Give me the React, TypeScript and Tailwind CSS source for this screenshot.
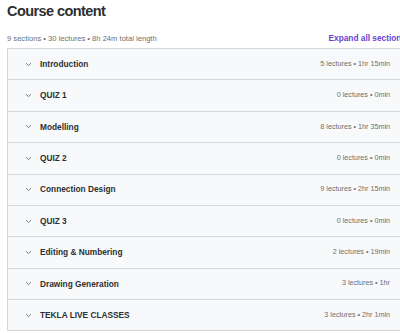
import React from 'react';

const sections = [
  { title: 'Introduction', meta: '5 lectures • 1hr 15min' },
  { title: 'QUIZ 1', meta: '0 lectures • 0min' },
  { title: 'Modelling', meta: '8 lectures • 1hr 35min' },
  { title: 'QUIZ 2', meta: '0 lectures • 0min' },
  { title: 'Connection Design', meta: '9 lectures • 2hr 15min' },
  { title: 'QUIZ 3', meta: '0 lectures • 0min' },
  { title: 'Editing & Numbering', meta: '2 lectures • 19min' },
  { title: 'Drawing Generation', meta: '3 lectures • 1hr' },
  { title: 'TEKLA LIVE CLASSES', meta: '3 lectures • 2hr 1min' },
];

const Chevron = () => (
  <svg width="7" height="5" viewBox="0 0 7 5" fill="none" className="shrink-0">
    <path d="M1 1.2 L3.5 3.6 L6 1.2" stroke="#6a6f73" strokeWidth="0.9" />
  </svg>
);

export default function App() {
  return (
    <div className="w-[400px] h-[333px] overflow-hidden bg-white font-['Liberation_Sans',Arial,sans-serif] text-[#2d2f31]">
      <div className="w-[406px] pl-[7px]">
        <h2 className="text-[14.5px] font-bold tracking-[-0.04em] leading-none pt-[4px]">Course content</h2>
        <div className="flex items-end justify-between mt-[13px] mb-[4px]">
          <span className="text-[7.6px] text-[#6a6f73]">9 sections • 30 lectures • 8h 24m total length</span>
          <button className="text-[8.3px] font-bold text-[#6b3fd2] whitespace-nowrap">Expand all sections</button>
        </div>
        <div className="border-t border-l border-[#d1d7dc]">
          {sections.map(s => (
            <div
              key={s.title}
              className="flex items-center h-[31.4px] bg-[#f7f9fa] border-b border-[#d1d7dc] pl-[17px] pr-[16px]"
            >
              <Chevron />
              <span className="ml-[8px] text-[8.3px] font-bold text-[#2d2f31]">{s.title}</span>
              <span className="ml-auto text-[7.2px] text-[#6a6f73]">{s.meta}</span>
            </div>
          ))}
        </div>
      </div>
    </div>
  );
}
